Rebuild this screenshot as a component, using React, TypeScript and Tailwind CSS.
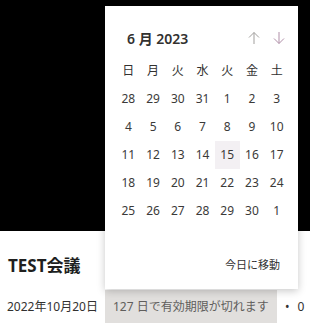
import React from 'react';

const weekdays = ['日', '月', '火', '水', '火', '金', '土'];

const weeks: number[][] = [
  [28, 29, 30, 31, 1, 2, 3],
  [4, 5, 6, 7, 8, 9, 10],
  [11, 12, 13, 14, 15, 16, 17],
  [18, 19, 20, 21, 22, 23, 24],
  [25, 26, 27, 28, 29, 30, 1],
];

function ArrowUp() {
  return (
    <svg width="14" height="14" viewBox="0 0 14 14" fill="none" stroke="#a19f9d" strokeWidth="1">
      <path d="M7 13V1.5M2 6.5L7 1.5l5 5" />
    </svg>
  );
}

function ArrowDown() {
  return (
    <svg width="14" height="14" viewBox="0 0 14 14" fill="none" stroke="#b08fa8" strokeWidth="1">
      <path d="M7 1v11.5M2 7.5l5 5 5-5" />
    </svg>
  );
}

function DatePopup() {
  return (
    <div className="absolute left-[105px] top-[6px] w-[193px] h-[283px] bg-white shadow-[0_2px_8px_rgba(0,0,0,0.22)] pt-[18px] px-[11px] flex flex-col">
      {/* Month header */}
      <div className="h-[28px] flex items-center justify-between pl-[11px] pr-[1px]">
        <span className="text-[14px] font-semibold text-[#323130]">6 月 2023</span>
        <div className="flex items-center gap-[11px]">
          <ArrowUp />
          <ArrowDown />
        </div>
      </div>

      {/* Calendar grid */}
      <div className="mt-[5px] grid grid-cols-7 w-[173px]">
        {weekdays.map((d, i) => (
          <div key={i} className="h-[28px] flex items-center justify-center text-[12px] text-[#323130]">
            {d}
          </div>
        ))}
        {weeks.flat().map((n, i) => (
          <div
            key={i}
            className={`h-[28px] flex items-center justify-center text-[12px] text-[#3b3a39] ${
              i === 18 ? 'bg-[#f3f0f3]' : ''
            }`}
          >
            {n}
          </div>
        ))}
      </div>

      {/* Go to today */}
      <div className="mt-auto mb-[16px] flex justify-end pr-[7px]">
        <span className="text-[11px] text-[#323130]">今日に移動</span>
      </div>
    </div>
  );
}

export default function App() {
  return (
    <div
      className="relative w-[310px] h-[323px] overflow-hidden bg-white"
      style={{ fontFamily: '"Noto Sans", "Noto Sans CJK JP", sans-serif' }}
    >
      <div className="h-[231px] bg-black" />

      <div className="pl-[8px] pt-[22px]">
        <h2 className="text-[17px] font-bold text-[#201f1e] leading-[26px]">TEST会議</h2>
      </div>

      <div className="mt-[11px] flex items-center h-[33px]">
        <span className="pl-[7px] w-[105px] text-[12px] text-[#323130]">2022年10月20日</span>
        <span className="h-full w-[172px] bg-[#e1dfdd] pl-[8px] flex items-center text-[12px] text-[#605e5c]">
          127 日で有効期限が切れます
        </span>
        <span className="ml-[8px] text-[12px] text-[#323130]">•</span>
        <span className="ml-[8px] text-[12px] text-[#323130]">0</span>
      </div>

      <DatePopup />
    </div>
  );
}
